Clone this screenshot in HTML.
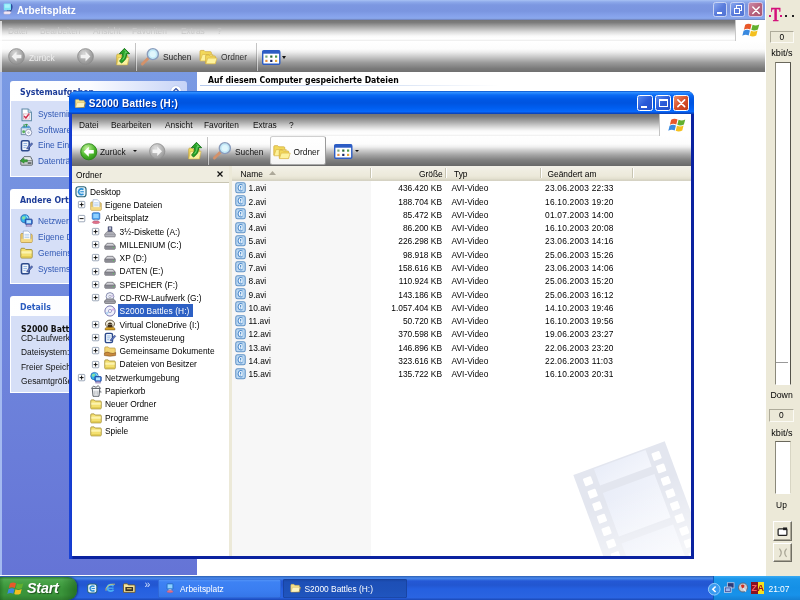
<!DOCTYPE html>
<html><head><meta charset="utf-8"><title>S2000 Battles (H:)</title>
<style>
*{box-sizing:border-box;margin:0;padding:0}
html,body{width:800px;height:600px;overflow:hidden;background:#fff}
body{position:relative;font:8.400px "Liberation Sans",sans-serif;color:#000}
.a{position:absolute;white-space:nowrap}
.b{font-weight:bold}
svg{position:absolute;overflow:visible}
/* background window */
#bt{left:0;top:0;width:765px;height:20.300px;background:linear-gradient(#a8c2f4 0,#8ca8ea 2px,#7c97e1 5px,#7a95e0 11px,#84a0ea 15px,#8aa8ee 18.300px,#7488c0 19.600px,#6a7488 20.300px)}
#bt .t{left:17px;top:5px;font:bold 10.1px "Liberation Sans",sans-serif;color:#fff;letter-spacing:.1px}
#bm{left:0;top:20.300px;width:765px;height:21.200px;background:linear-gradient(#747474 0,#7c7c7c 2.500px,#aaa 7px,#dcdcdc 12px,#fafafa 16px,#fff 19px,#f0f0f0 20.500px)}
#bm .m{top:5.800px;color:#c8c8c8;filter:blur(.6px)}
#bb{left:0;top:41.500px;width:765px;height:30.500px;background:linear-gradient(#fff 0,#fcfcfc 7px,#eee 10px,#ccc 14.500px,#9c9c9c 20.500px,#7a7a7a 26.500px,#6e6e6e 30.500px)}
#bside{left:0;top:72px;width:197px;height:503px;background:linear-gradient(#7a9ae3,#6574d6);border-left:2px solid #a4baf0}
.ph{left:10px;width:177px;height:20px;border-radius:3px 3px 0 0;background:linear-gradient(90deg,#fff 0,#fbfcff 45%,#c6d3f7 100%);color:#1d3c98;font:bold 8.700px "DejaVu Sans Condensed","Liberation Sans",sans-serif;padding:6.200px 0 0 10px}
.pb{left:10px;width:177px;background:#d6dff7;border:1px solid #fff;border-top:0}
.pl{left:38px;color:#3058b4}
.pd{left:21px;color:#111}
/* right panel */
#dsl{left:765px;top:0;width:35px;height:576px;background:#ece9d8;border-left:1.500px solid #fff}
.sunk{border:1px solid;border-color:#aeab9a #fbfaf4 #fbfaf4 #aeab9a}
.btn{background:#ece9d8;border:1px solid;border-color:#fff #716f64 #716f64 #fff;box-shadow:inset -1px -1px 0 #aca899}
/* taskbar */
#tb{left:0;top:576.400px;width:800px;height:23.600px;background:linear-gradient(#3a6cbc 0,#2f66c0 .8px,#4a8aec 2px,#3c78e2 3.200px,#2458d6 5px,#2256d0 9px,#2560e0 13px,#2862e0 18px,#2a64e2 21.500px,#1c4cbc 23.600px)}
#start{left:0;top:.3px;width:77px;height:23.300px;border-radius:0 9px 9px 0;background:linear-gradient(90deg,rgba(0,50,0,.25) 0,rgba(0,50,0,0) 4px,rgba(0,50,0,0) 80%,rgba(0,50,0,.35) 100%),linear-gradient(#2f7a36 0,#4fa84f 2.500px,#44a044 6px,#3a943a 12px,#3a943a 18px,#2f7c2f 23.300px);box-shadow:1px 0 2px rgba(0,0,40,.5)}
#start span{left:27px;top:3.300px;font:italic bold 14.300px "Liberation Sans",sans-serif;color:#fff;text-shadow:1px 1px 1px rgba(0,0,0,.45);letter-spacing:-.2px}
.tk{top:2.500px;height:19.500px;border-radius:2px;color:#fff}
.tk span{top:5px}
#tray{left:713px;top:0;width:87px;height:24px;background:linear-gradient(#3aaaf2 0,#1a96ea 3px,#1590e6 12px,#1892ea 19px,#1480d4 24px);border-left:1px solid #0e5cb8}
/* main window */
#w{left:69px;top:91px;width:625px;height:468px;background:linear-gradient(90deg,#1a44d8 0,#1238cc 3px,#0a22a0 4px);border-radius:7px 7px 0 0}
#wt{left:0;top:0;width:625px;height:23px;border-radius:7px 7px 0 0;background:linear-gradient(#0a50c8 0,#2e8eff 1.500px,#0a6af4 4px,#0058e6 8px,#0054e0 12px,#005ef0 17px,#0668fc 20.500px,#0a48c4 22.300px,#0a3cb0 23px)}
#wt .t{left:19.800px;top:7px;font:bold 10px "Liberation Sans",sans-serif;color:#fff;text-shadow:.8px .8px 0 #0a2a8a;letter-spacing:.24px}
.cb{top:4px;width:16px;height:16px;border:1px solid #fff;border-radius:2.500px}
#wc{left:3px;top:23px;width:619px;height:442px;background:#fff;overflow:hidden}
#wm{left:0;top:0;width:619px;height:22px;background:linear-gradient(#747474 0,#7c7c7c 2.500px,#aaa 8px,#e2e2e2 14px,#fafafa 17px,#fff 20px,#f2f2f2 21.500px,#fff 22px)}
#wm .m{top:6px;color:#111}
#wb{left:0;top:22px;width:619px;height:29.500px;background:linear-gradient(#fff 0,#fcfcfc 8px,#eee 11px,#d0d0d0 14px,#a4a4a4 19px,#808080 24px,#6a6a6a 29.500px)}
#tree{left:0;top:51.500px;width:157px;height:391px;background:#fff}
#treeh{left:0;top:0;width:157px;height:17px;background:#efede0;border-bottom:1px solid #c8c5b2}
#split{left:157px;top:51.500px;width:3px;height:391px;background:#ece9d8}
#list{left:160px;top:51.500px;width:459px;height:391px;background:#fff;overflow:hidden}
#lh{left:0;top:0;width:459px;height:15px;background:linear-gradient(#f3f1e8,#ece9da 10px,#e2dfce 13px,#d0ccbc 14.300px,#e4e2d6 15px)}
#lh span{top:3px}
.sep{top:2px;width:1px;height:10px;background:#c8c5b2;border-right:1px solid #fff;width:2px}
#sorted{left:0;top:15px;width:139px;height:377px;background:#f7f7f7}
.tr{left:0;height:13.280px;width:100%}
.tr span{top:1.800px}
.pm{width:7px;height:7px;border:.8px solid #8a96a8;background:#fff;border-radius:1px}
.pm:before{content:"";position:absolute;left:1px;top:2.300px;width:3.400px;height:.9px;background:#000}
.pm.p:after{content:"";position:absolute;left:2.250px;top:1.050px;width:.9px;height:3.400px;background:#000}
.r{left:0;height:13.280px;width:459px}
.r span{top:1.600px}
.dt{letter-spacing:.22px}
</style></head><body><div id="root" style="position:absolute;left:0;top:0;width:800px;height:600px;will-change:transform">
<div class="a" id="bt">
<svg style="left:3px;top:3px" width="10" height="12" viewBox="0 0 10 12" ><path d="M7.500 .8Q9.600 1 9.600 4Q9.600 7.500 6 8.500L7.500 7Z" fill="#2c4c9c"/><rect x=".8" y=".4" width="7.200" height="6.800" rx=".8" fill="#7ee4f6"/><rect x="1.800" y="1.300" width="5" height="3.500" fill="#a8f2fc"/><path d="M4 7.200Q7 7.800 8.800 6.500L8 8.800H3.500Z" fill="#3a4a8a"/><path d="M.3 10L1.800 8.300H7L8.300 9.800L6.500 11.300H1.500Z" fill="#f4e6f4" stroke="#9aa0c8" stroke-width=".5"/></svg>
<span class="a t">Arbeitsplatz</span>
<div class="a cb" style="left:713px;top:1.500px;width:14px;height:15.500px;border-color:#c8d4f4;background:linear-gradient(135deg,#8aa8ee,#5a7cdc 50%,#5274d4)"><div class="a" style="left:2.500px;top:9px;width:5.500px;height:2.300px;background:#fff"></div></div>
<div class="a cb" style="left:730px;top:1.500px;width:14.500px;height:15.500px;border-color:#c8d4f4;background:linear-gradient(135deg,#8aa8ee,#5a7cdc 50%,#5274d4)"><div class="a" style="left:5px;top:2.500px;width:6px;height:5.500px;border:1px solid #fff;border-top-width:1.800px"></div><div class="a" style="left:2.500px;top:5.500px;width:6px;height:5.500px;border:1px solid #fff;border-top-width:1.800px;background:#5a7cdc"></div></div>
<div class="a cb" style="left:748px;top:1.500px;width:15px;height:15.500px;border-color:#d8c8e4;background:linear-gradient(135deg,#cc8aa8,#b8627e 50%,#a85672)"><svg style="left:3px;top:3px" width="8" height="8.5" viewBox="0 0 8 8" ><path d="M.8 .8L7.200 7.200M7.200 .8L.8 7.200" stroke="#fff" stroke-width="1.500" stroke-linecap="round"/></svg></div>
</div>
<div class="a" id="bm">
<span class="a m" style="left:8px">Datei</span>
<span class="a m" style="left:40px">Bearbeiten</span>
<span class="a m" style="left:93px">Ansicht</span>
<span class="a m" style="left:132px">Favoriten</span>
<span class="a m" style="left:181px">Extras</span>
<span class="a m" style="left:217px">?</span>
<div class="a" style="left:734.500px;top:0;width:30.500px;height:21px;background:#fff;border-left:1px solid #c8c8c8"><svg style="left:6.5px;top:2px" width="18" height="16" viewBox="-1.5 0 17 15" ><g opacity="1"><path d="M1.500 2.500Q4.500 .8 7.500 2.300L6.300 7Q3.300 5.600 .3 7.200Z" fill="#e8582a"/><path d="M8.500 2.600Q11.500 4 14.800 2.300L13.500 7Q10.300 8.600 7.300 7.300Z" fill="#62b030"/><path d="M0 8.300Q3 6.600 6 8L4.800 12.700Q1.800 11.300 -1.200 12.900Z" fill="#3a8ae0"/><path d="M7 8.300Q10 9.700 13.200 8L12 12.700Q8.800 14.300 5.800 13Z" fill="#f4c020"/></g></svg></div>
</div>
<div class="a" id="bb">
<svg style="left:7.5px;top:6.5px" width="17" height="17" viewBox="0 0 16 16" ><defs><radialGradient id="g1" cx=".4" cy=".3" r=".8"><stop offset="0" stop-color="#d8d8d8"/><stop offset=".6" stop-color="#a4a4a4"/><stop offset="1" stop-color="#8a8a8a"/></radialGradient></defs><circle cx="8" cy="8" r="7.4" fill="url(#g1)" stroke="#8a8a8a" stroke-width=".8"/><polygon points="3.4,8 8,3.4 8,6.3 12.6,6.3 12.6,9.7 8,9.7 8,12.6" fill="#f2f2f2"/></svg>
<span class="a" style="left:29px;top:11px;color:#eee;filter:blur(.4px)">Zurück</span>
<svg style="left:77px;top:6.5px" width="17" height="17" viewBox="0 0 16 16" ><defs><radialGradient id="g2" cx=".4" cy=".3" r=".8"><stop offset="0" stop-color="#d8d8d8"/><stop offset=".6" stop-color="#a4a4a4"/><stop offset="1" stop-color="#8a8a8a"/></radialGradient></defs><circle cx="8" cy="8" r="7.4" fill="url(#g2)" stroke="#8a8a8a" stroke-width=".8"/><polygon points="12.6,8 8,3.4 8,6.3 3.4,6.3 3.4,9.7 8,9.7 8,12.6" fill="#f2f2f2"/></svg>
<svg style="left:115.5px;top:5.5px" width="15" height="19" viewBox="0 0 16 19" ><path d="M.8 8Q.8 7 1.800 7H4.500L5.500 8H11.500Q12.500 8 12.500 9V18H.8Z" fill="#f2dc5e" stroke="#c8a838" stroke-width=".8"/><path d="M2.500 10.500H14L12 18.500H.8Z" fill="#faf0a0" stroke="#d0b040" stroke-width=".6"/><path d="M9 .8L14.600 6.500H11.500Q11.800 12.500 6 16.500L3.800 14.500Q7.500 11 7 6.500H3.600Z" fill="#28a428" stroke="#147014" stroke-width=".9" stroke-linejoin="round"/><path d="M9 2.500L11.500 5.200H9.800Q10 10 7 13" fill="none" stroke="#7ad87a" stroke-width=".9"/></svg>
<div class="a" style="left:136px;top:1px;width:1px;height:28px;background:rgba(255,255,255,.55);box-shadow:-1px 0 0 rgba(90,90,90,.35)"></div>
<svg style="left:140px;top:5px" width="20" height="19" viewBox="0 0 20 20" ><path d="M2 18L8.500 11.500" stroke="#d4926a" stroke-width="3" stroke-linecap="round"/><circle cx="13" cy="7.500" r="5.800" fill="#c4eaf8" stroke="#8a9cbc" stroke-width="1.500"/><circle cx="13" cy="7.500" r="3.200" fill="#e0f6fc"/></svg>
<span class="a" style="left:163px;top:10.500px;color:#222">Suchen</span>
<svg style="left:199px;top:6px" width="19" height="17" viewBox="0 0 23 21" ><path d="M1 4.200Q1 3 2.200 3H6L7.500 4.500H13.800Q15 4.500 15 5.700V15H1Z" fill="#f2d85a" stroke="#cfa83a" stroke-width=".9"/><path d="M4 8H17L14.600 16H1.200Z" fill="#fdf29c" stroke="#d8b444" stroke-width=".8"/><path d="M8 9.500Q8 8.500 9 8.500H12L13.200 9.800H19Q20 9.800 20 10.800V19H8Z" fill="#f2d85a" stroke="#cfa83a" stroke-width=".9"/><path d="M10.500 12.500H22L19.800 19.600H8.200Z" fill="#fdf29c" stroke="#d8b444" stroke-width=".8"/></svg>
<span class="a" style="left:221px;top:10.500px;color:#333">Ordner</span>
<div class="a" style="left:256.500px;top:1px;width:1px;height:28px;background:rgba(255,255,255,.55);box-shadow:-1px 0 0 rgba(90,90,90,.35)"></div>
<svg style="left:262px;top:8px" width="18.5" height="15" viewBox="0 0 18.5 15" ><rect x=".7" y=".7" width="17.100" height="13.600" rx="1.200" fill="#fff" stroke="#2c5cc4" stroke-width="1.400"/><rect x=".7" y=".7" width="17.100" height="3" fill="#2c5cc4"/><g><rect x="3.300" y="5.500" width="2.200" height="2.200" fill="#7aa878"/><rect x="8.200" y="5.500" width="2.200" height="2.200" fill="#2a6a3a"/><rect x="13" y="5.500" width="2.200" height="2.200" fill="#4a9a4a"/><rect x="3.300" y="9.800" width="2.200" height="2.200" fill="#e89040"/><rect x="8.200" y="9.800" width="2.200" height="2.200" fill="#1a2a6a"/><rect x="13" y="9.800" width="2.200" height="2.200" fill="#e8a838"/></g></svg>
<div class="a" style="left:282px;top:14px;border:2.500px solid transparent;border-top:3px solid #111"></div>
</div>
<div class="a" id="bside"></div>
<div class="a" style="left:0;top:21px;width:1.500px;height:51px;background:rgba(255,255,255,.7)"></div>
<div class="a ph" style="top:81px">Systemaufgaben</div><svg style="left:170px;top:84.5px" width="12" height="12" viewBox="0 0 12 12" ><circle cx="6" cy="6" r="5.300" fill="#fff" stroke="#b8c8ee" stroke-width=".8"/><path d="M3.500 6L6 3.500L8.500 6M3.500 8.800L6 6.300L8.500 8.800" fill="none" stroke="#2a4aa0" stroke-width="1.100"/></svg>
<div class="a pb" style="top:101px;height:75.500px"></div>
<svg style="left:20px;top:107.60000000000001px" width="13" height="13.5" viewBox="0 0 16 16" ><path d="M2.500 1H10L14 5V15.300H2.500Z" fill="#fff" stroke="#5a86a4" stroke-width="1.300"/><path d="M10 1V5H14" fill="#d4e4f0" stroke="#5a86a4" stroke-width="1"/><path d="M5 9.500L7.200 12L11.500 6.500" fill="none" stroke="#d03050" stroke-width="1.800"/><rect x="4.300" y="7" width="7" height="6.300" fill="none" stroke="#c890a0" stroke-width=".7"/></svg>
<span class="a pl" style="top:109.4px">Systeminformationen anzeigen</span>
<svg style="left:20px;top:123.10000000000001px" width="13" height="13.5" viewBox="0 0 16 16" ><path d="M1.500 6L4 3.500H11L13 6V14H1.500Z" fill="#d8e6f0" stroke="#5a7a98" stroke-width="1"/><path d="M4 3.500H11L13 6H1.500Z" fill="#58a0d8"/><path d="M5 1V5M8 .8V4.500M6.300 1.500H9.500" stroke="#3a9a4a" stroke-width="1.200"/><circle cx="10.500" cy="11.500" r="4" fill="#fafbff" stroke="#7a86a8" stroke-width="1"/><circle cx="10.500" cy="11.500" r="1.100" fill="#cfd6e8" stroke="#8a94b0" stroke-width=".5"/><circle cx="4.500" cy="10.500" r="1.800" fill="#58b058"/></svg>
<span class="a pl" style="top:124.9px">Software</span>
<svg style="left:20px;top:138.6px" width="13" height="13.5" viewBox="0 0 16 16" ><rect x="1.800" y="1.800" width="9.500" height="12.400" rx="1.800" fill="#f0f6fc" stroke="#2c4a8c" stroke-width="1.900"/><path d="M4.200 5.300H8.800M4.200 7.800H8.800M4.200 10.300H7" stroke="#7aa4dc" stroke-width="1"/><path d="M8.800 10L14.300 4.300L15.600 5.800L10.500 11.500L8.300 12Z" fill="#5a76c0" stroke="#2a3a78" stroke-width=".7"/></svg>
<span class="a pl" style="top:140.4px">Eine Einstellung ändern</span>
<svg style="left:20px;top:154.1px" width="13" height="13.5" viewBox="0 0 16 15" ><path d="M1 7L5 2.500H13L15.300 7V12Q15.300 13 14.300 13H2Q1 13 1 12Z" fill="#c8ccd0" stroke="#4a5458" stroke-width="1"/><path d="M5.300 3.300H12.600L14.300 6.800H2.200Z" fill="#e4e8ea"/><path d="M1.300 7.300H15" stroke="#606868" stroke-width=".8"/><path d="M.3 7.500L5 4.500V6.300H9V8.800H5V10.500Z" fill="#3aa43a" stroke="#1a701a" stroke-width=".6"/><rect x="9.500" y="9.500" width="4.500" height="1.600" fill="#404848"/></svg>
<span class="a pl" style="top:155.9px">Datenträger auswerfen</span>
<div class="a ph" style="top:188.500px">Andere Orte</div><svg style="left:170px;top:192px" width="12" height="12" viewBox="0 0 12 12" ><circle cx="6" cy="6" r="5.300" fill="#fff" stroke="#b8c8ee" stroke-width=".8"/><path d="M3.500 6L6 3.500L8.500 6M3.500 8.800L6 6.300L8.500 8.800" fill="none" stroke="#2a4aa0" stroke-width="1.100"/></svg>
<div class="a pb" style="top:208.500px;height:75.500px"></div>
<svg style="left:20px;top:214.0px" width="13" height="13.5" viewBox="0 0 16 16" ><circle cx="6" cy="5.500" r="5" fill="#36b4ec" stroke="#1a5aa8" stroke-width=".9"/><path d="M2.500 3.500Q4.500 1.500 7 3Q6.500 6 4 6.800Q2 5.500 2.500 3.500Z" fill="#8ae0a0"/><path d="M7.500 2Q10 3 10 6" fill="none" stroke="#c8f0ff" stroke-width="1"/><rect x="6.500" y="6" width="8.500" height="6.500" rx="1" fill="#3a7ad8" stroke="#1c3c8c" stroke-width="1"/><rect x="8" y="7.300" width="5.500" height="3.800" fill="#b4e4ff"/><path d="M8.500 12.500H13L14.200 14.800H7.300Z" fill="#c4b4dc" stroke="#6a5a98" stroke-width=".6"/></svg>
<span class="a pl" style="top:215.8px">Netzwerkumgebung</span>
<svg style="left:20px;top:230.0px" width="13" height="13.5" viewBox="0 0 16 16" ><path d="M1 5Q1 4 2 4H6L7 5H14Q15 5 15 6V14Q15 15 14 15H2Q1 15 1 14Z" fill="#f0cf6c" stroke="#b8923a" stroke-width=".9"/><path d="M4 1H10L13 4V12H4Z" fill="#fff" stroke="#8aa0c8" stroke-width=".8"/><path d="M5.500 5H11.500M5.500 7H11.500M5.500 9H11.500" stroke="#9cc0ea" stroke-width=".9"/><path d="M1.500 10.500H14.500V14.500H1.500Z" fill="#f6dc86" opacity=".9"/></svg>
<span class="a pl" style="top:231.8px">Eigene Dateien</span>
<svg style="left:20px;top:246.0px" width="13" height="13.5" viewBox="0 0 16 15" ><path d="M1 3.200Q1 2 2.200 2H5.500L7 3.500H13.800Q15 3.500 15 4.700V12.800Q15 14 13.800 14H2.200Q1 14 1 12.800Z" fill="#f4e070" stroke="#a08c34" stroke-width="1.100"/><path d="M1.700 5.600H14.300V8.500H1.700Z" fill="#fdf6b8" opacity=".85"/><path d="M1.700 11.500H14.300V13.300H1.700Z" fill="#e0c850" opacity=".8"/></svg>
<span class="a pl" style="top:247.8px">Gemeinsame Dokumente</span>
<svg style="left:20px;top:262.0px" width="13" height="13.5" viewBox="0 0 16 16" ><rect x="1.800" y="1.800" width="9.500" height="12.400" rx="1.800" fill="#f0f6fc" stroke="#2c4a8c" stroke-width="1.900"/><path d="M4.200 5.300H8.800M4.200 7.800H8.800M4.200 10.300H7" stroke="#7aa4dc" stroke-width="1"/><path d="M8.800 10L14.300 4.300L15.600 5.800L10.500 11.500L8.300 12Z" fill="#5a76c0" stroke="#2a3a78" stroke-width=".7"/></svg>
<span class="a pl" style="top:263.8px">Systemsteuerung</span>
<div class="a ph" style="top:296px;color:#2a5cc0">Details</div><svg style="left:170px;top:299.5px" width="12" height="12" viewBox="0 0 12 12" ><circle cx="6" cy="6" r="5.300" fill="#fff" stroke="#b8c8ee" stroke-width=".8"/><path d="M3.500 6L6 3.500L8.500 6M3.500 8.800L6 6.300L8.500 8.800" fill="none" stroke="#2a4aa0" stroke-width="1.100"/></svg>
<div class="a pb" style="top:316px;height:77px"></div>
<span class="a pd" style="top:323.500px;font:bold 8.600px 'DejaVu Sans Condensed','Liberation Sans',sans-serif">S2000 Battles (H:)</span>
<span class="a pd" style="top:333px">CD-Laufwerk</span>
<span class="a pd" style="top:347px">Dateisystem: CDFS</span>
<span class="a pd" style="top:361.500px">Freier Speicher: 0 Byte</span>
<span class="a pd" style="top:375.500px">Gesamtgröße: 2,79 GB</span>
<div class="a" style="left:197px;top:72px;width:568px;height:504px;background:#fff"></div>
<div class="a" style="left:208px;top:75px;font:bold 8.600px 'DejaVu Sans Condensed','Liberation Sans',sans-serif">Auf diesem Computer gespeicherte Dateien</div>
<div class="a" style="left:200px;top:85.300px;width:300px;height:1px;background:linear-gradient(90deg,#b4c8ec,#d4e0f4 60%,#fff)"></div>
<div class="a" id="dsl">
<span class="a" style="left:5.0px;top:4.500px;font:bold 19px 'Liberation Serif',serif;color:#d4107a;line-height:19px;-webkit-text-stroke:.5px #d4107a;transform:scaleX(.74);transform-origin:0 0">T</span>
<div class="a" style="left:2.7000000000000455px;top:15px;width:2px;height:2px;background:#d4107a"></div>
<div class="a" style="left:14.100000000000023px;top:15px;width:2px;height:2px;background:#d4107a"></div>
<div class="a" style="left:19.299999999999955px;top:14.800px;width:2.200px;height:2.200px;background:#222"></div>
<div class="a" style="left:26.299999999999955px;top:14.800px;width:2.200px;height:2.200px;background:#222"></div>
<div class="a sunk" style="left:3.5px;top:30.500px;width:24.500px;height:12.500px;text-align:center;line-height:11px">0</div>
<span class="a" style="left:5.2999999999999545px;top:48px;font-size:9.100px">kbit/s</span>
<div class="a" style="left:8.5px;top:61.500px;width:16.200px;height:323px;background:#fff;border:1px solid;border-color:#6a685c #55534a #fff #8a887a"><div class="a" style="left:0;top:299px;width:12px;height:1px;background:#999"></div></div>
<span class="a" style="left:4.5px;top:389.500px;font-size:8.700px">Down</span>
<div class="a sunk" style="left:3.1000000000000227px;top:409px;width:24.500px;height:13px;text-align:center;line-height:11.500px">0</div>
<span class="a" style="left:5.2999999999999545px;top:427.500px;font-size:9.100px">kbit/s</span>
<div class="a" style="left:8.5px;top:441px;width:16.200px;height:53px;background:#fff;border:1px solid;border-color:#6a685c #d8d5c4 #fff #8a887a"></div>
<span class="a" style="left:10.100000000000023px;top:500px">Up</span>
<div class="a btn" style="left:6.5px;top:521px;width:19.500px;height:19.500px"><svg style="left:3.8px;top:4.5px" width="11" height="9" viewBox="0 0 9 8" ><rect x=".6" y="1.600" width="7.800" height="5.800" rx=".8" fill="#fff" stroke="#222" stroke-width="1.100"/><rect x="5" y=".4" width="3.600" height="2.400" fill="#222"/></svg></div>
<div class="a btn" style="left:6.5px;top:542.500px;width:19.500px;height:19.500px"><svg style="left:4.3px;top:4.5px" width="10" height="9.5" viewBox="0 0 8 8" ><path d="M1 .5Q4 4 1 7.500M7 .5Q4 4 7 7.500" fill="none" stroke="#a8a595" stroke-width="1"/></svg></div>
</div>
<div class="a" id="tb"><div class="a" id="start"><svg style="left:7px;top:4.5px" width="17" height="15" viewBox="-1.5 0 17 15" ><g opacity="1"><path d="M1.500 2.500Q4.500 .8 7.500 2.300L6.300 7Q3.300 5.600 .3 7.200Z" fill="#e8582a"/><path d="M8.500 2.600Q11.500 4 14.800 2.300L13.500 7Q10.300 8.600 7.300 7.300Z" fill="#62b030"/><path d="M0 8.300Q3 6.600 6 8L4.800 12.700Q1.800 11.300 -1.200 12.900Z" fill="#3a8ae0"/><path d="M7 8.300Q10 9.700 13.200 8L12 12.700Q8.800 14.300 5.800 13Z" fill="#f4c020"/></g></svg><span class="a">Start</span></div>
<svg style="left:87px;top:6.5px" width="10.5" height="11" viewBox="0 0 16 16" ><rect x="1" y="1" width="14" height="14" rx="3.5" fill="#e8f4fb" stroke="#2a6478" stroke-width="1.6"/><path d="M11.500 5Q8 3 5.500 5.500Q3.500 8 5.500 10.500Q8 13 11.500 11" fill="none" stroke="#2a8fd6" stroke-width="2.400"/><path d="M7 8H12" stroke="#2a8fd6" stroke-width="1.600"/></svg>
<svg style="left:105px;top:6px" width="11" height="12" viewBox="0 0 16 16" ><path d="M12.500 5.500Q10 2.500 6.500 3.500Q3 5 3.500 9Q4.500 12.500 8.500 12.500Q11 12.300 12.500 10.500" fill="none" stroke="#4ab0f4" stroke-width="2.600"/><path d="M4 8.300H12.500" stroke="#4ab0f4" stroke-width="1.800"/><path d="M1.500 12Q0 8 5 4.500Q10 1.500 14.500 2.500" fill="none" stroke="#f0d050" stroke-width="1.100"/></svg>
<svg style="left:122.5px;top:7px" width="12.5" height="10" viewBox="0 0 13 10" ><path d="M.5 1.500Q.5 .6 1.400 .6H4.500L5.500 1.800H11.600Q12.500 1.800 12.500 2.700V9.500H.5Z" fill="#f4e4a0" stroke="#705820" stroke-width=".9"/><rect x="2.500" y="4" width="8" height="4.200" fill="#3a3020"/><rect x="4" y="5" width="5" height="1.400" fill="#c8b060"/></svg>
<span class="a" style="left:144.500px;top:2px;color:#cfe0ff;font-size:10.500px">»</span>
<div class="a tk" style="left:157.500px;width:123.500px;background:linear-gradient(#5a9af8 0,#3e82f4 3px,#3a7df0 12px,#3474e6 19.500px);box-shadow:inset 0 0 0 .6px #2a5cc8"><svg style="left:7px;top:3.5px" width="10" height="12" viewBox="0 0 16 16" ><rect x="3" y="1" width="10" height="9" rx="1.500" fill="#4aa3ee" stroke="#2a62b8" stroke-width="1"/><rect x="4.500" y="2.500" width="7" height="5.500" fill="#8fd0ff"/><path d="M6 10H10L11 12.500H5Z" fill="#c8d4e8" stroke="#8090b0" stroke-width=".5"/><ellipse cx="8" cy="13.800" rx="5" ry="1.700" fill="#e2728a" stroke="#b04060" stroke-width=".5"/></svg><span class="a" style="left:22.500px">Arbeitsplatz</span></div>
<div class="a tk" style="left:282.500px;width:124.500px;background:linear-gradient(#1844a0 0,#1d4fb6 3px,#1e52ba 12px,#2056c0 19.500px);box-shadow:inset 0 0 0 .6px #163c94"><svg style="left:7px;top:4.5px" width="11" height="10" viewBox="0 0 16 15" ><path d="M1 3.200Q1 2 2.200 2H5.500L7 3.500H12.800Q14 3.500 14 4.700V13H1Z" fill="#f4e08a" stroke="#c8a850" stroke-width=".8"/><path d="M3.500 6.500H15.600L13.600 13.600H1.200Z" fill="#fdf4c0" stroke="#cfb058" stroke-width=".7"/><path d="M14.200 7L15.800 6.800L13.800 13.800H2L13 13Z" fill="#4a4020" opacity=".55"/></svg><span class="a" style="left:22px">S2000 Battles (H:)</span></div>
<div class="a" id="tray">
<svg style="left:-6.5px;top:6.5px" width="12.5" height="12.5" viewBox="0 0 12 12" ><circle cx="6" cy="6" r="5.600" fill="#3a9af0" stroke="#a8d8ff" stroke-width=".8"/><path d="M7.300 3.300L4.600 6L7.300 8.700" fill="none" stroke="#fff" stroke-width="1.500"/></svg>
<svg style="left:9.5px;top:6px" width="10.5" height="12" viewBox="0 0 11 12" ><rect x="3.500" y=".5" width="7" height="5.500" fill="#2a3a78" stroke="#c8d0e8" stroke-width=".8"/><rect x=".5" y="5" width="7" height="5.500" fill="#3a4a98" stroke="#d8e0f0" stroke-width=".8"/><rect x="1.800" y="6.300" width="4.400" height="3" fill="#9ab8f0"/></svg>
<svg style="left:24px;top:6px" width="10" height="11" viewBox="0 0 10 11" ><circle cx="5" cy="5.500" r="4.500" fill="#c8ccd4" stroke="#5a6070" stroke-width=".9"/><path d="M3 3Q5 1.800 6.500 3.500Q6.500 6 4.500 6.500Q3 5 3 3Z" fill="#d03020"/><path d="M5 6L8 9.500" stroke="#e8e8f0" stroke-width="1.200"/></svg>
<div class="a" style="left:37px;top:6px;width:6.500px;height:12px;background:#8a1020;color:#ff5a5a;font:bold 9px 'Liberation Sans',sans-serif;line-height:12px;text-align:center">Z</div>
<div class="a" style="left:43.500px;top:6px;width:6.500px;height:12px;background:#f4e020;color:#a01020;font:bold 9px 'Liberation Sans',sans-serif;line-height:12px;text-align:center">A</div>
<span class="a" style="left:54.500px;top:7.500px;color:#fff;font-size:8.500px;letter-spacing:-.1px">21:07</span>
</div></div>
<div class="a" id="w">
<div class="a" id="wt"><svg style="left:4.5px;top:6.5px" width="12.5" height="10.5" viewBox="0 0 16 15" ><path d="M1 3.200Q1 2 2.200 2H5.500L7 3.500H12.800Q14 3.500 14 4.700V13H1Z" fill="#f4e08a" stroke="#c8a850" stroke-width=".8"/><path d="M3.500 6.500H15.600L13.600 13.600H1.200Z" fill="#fdf4c0" stroke="#cfb058" stroke-width=".7"/><path d="M14.200 7L15.800 6.800L13.800 13.800H2L13 13Z" fill="#4a4020" opacity=".55"/></svg><span class="a t">S2000 Battles (H:)</span>
<div class="a cb" style="left:568px;background:linear-gradient(135deg,#5a8cf0,#2a5ad8 50%,#2450c8)"><div class="a" style="left:3px;top:9.500px;width:6px;height:2.500px;background:#fff"></div></div>
<div class="a cb" style="left:586px;background:linear-gradient(135deg,#5a8cf0,#2a5ad8 50%,#2450c8)"><div class="a" style="left:3px;top:3px;width:8.500px;height:8px;border:1px solid #fff;border-top-width:2.200px"></div></div>
<div class="a cb" style="left:604px;background:linear-gradient(135deg,#f0906a,#d8502a 50%,#c03c18)"><svg style="left:3px;top:3px" width="8.5" height="8.5" viewBox="0 0 8 8" ><path d="M.8 .8L7.200 7.200M7.200 .8L.8 7.200" stroke="#fff" stroke-width="1.500" stroke-linecap="round"/></svg></div>
</div>
<div class="a" id="wc">
<div class="a" id="wm">
<span class="a m" style="left:7px">Datei</span>
<span class="a m" style="left:39px">Bearbeiten</span>
<span class="a m" style="left:93px">Ansicht</span>
<span class="a m" style="left:132px">Favoriten</span>
<span class="a m" style="left:181px">Extras</span>
<span class="a m" style="left:217px">?</span>
<div class="a" style="left:587px;top:0;width:32px;height:22px;background:#fff;border-left:1px solid #c4c4c4"><svg style="left:8px;top:2.5px" width="18" height="16" viewBox="-1.5 0 17 15" ><g opacity="1"><path d="M1.500 2.500Q4.500 .8 7.500 2.300L6.300 7Q3.300 5.600 .3 7.200Z" fill="#e8582a"/><path d="M8.500 2.600Q11.500 4 14.800 2.300L13.500 7Q10.300 8.600 7.300 7.300Z" fill="#62b030"/><path d="M0 8.300Q3 6.600 6 8L4.800 12.700Q1.800 11.300 -1.200 12.900Z" fill="#3a8ae0"/><path d="M7 8.300Q10 9.700 13.200 8L12 12.700Q8.800 14.300 5.800 13Z" fill="#f4c020"/></g></svg></div>
</div>
<div class="a" id="wb">
<svg style="left:7.5px;top:6.5px" width="17.5" height="17.5" viewBox="0 0 16 16" ><defs><radialGradient id="g3" cx=".4" cy=".3" r=".8"><stop offset="0" stop-color="#c8f4a0"/><stop offset=".6" stop-color="#48b428"/><stop offset="1" stop-color="#2a8418"/></radialGradient></defs><circle cx="8" cy="8" r="7.4" fill="url(#g3)" stroke="#2a8418" stroke-width=".8"/><polygon points="3.4,8 8,3.4 8,6.3 12.6,6.3 12.6,9.7 8,9.7 8,12.6" fill="#fff"/></svg>
<span class="a" style="left:28px;top:10.500px;color:#111">Zurück</span>
<div class="a" style="left:61px;top:14px;border:2.200px solid transparent;border-top:2.800px solid #111"></div>
<svg style="left:77px;top:7px" width="16.5" height="16.5" viewBox="0 0 16 16" ><defs><radialGradient id="g4" cx=".4" cy=".3" r=".8"><stop offset="0" stop-color="#e0e0e0"/><stop offset=".6" stop-color="#b0b0b0"/><stop offset="1" stop-color="#909090"/></radialGradient></defs><circle cx="8" cy="8" r="7.4" fill="url(#g4)" stroke="#909090" stroke-width=".8"/><polygon points="12.6,8 8,3.4 8,6.3 3.4,6.3 3.4,9.7 8,9.7 8,12.6" fill="#f4f4f4"/></svg>
<svg style="left:115.5px;top:5px" width="15" height="19" viewBox="0 0 16 19" ><path d="M.8 8Q.8 7 1.800 7H4.500L5.500 8H11.500Q12.500 8 12.500 9V18H.8Z" fill="#f2dc5e" stroke="#c8a838" stroke-width=".8"/><path d="M2.500 10.500H14L12 18.500H.8Z" fill="#faf0a0" stroke="#d0b040" stroke-width=".6"/><path d="M9 .8L14.600 6.500H11.500Q11.800 12.500 6 16.500L3.800 14.500Q7.500 11 7 6.500H3.600Z" fill="#28a428" stroke="#147014" stroke-width=".9" stroke-linejoin="round"/><path d="M9 2.500L11.500 5.200H9.800Q10 10 7 13" fill="none" stroke="#7ad87a" stroke-width=".9"/></svg>
<div class="a" style="left:136px;top:1px;width:1px;height:28px;background:rgba(255,255,255,.55);box-shadow:-1px 0 0 rgba(90,90,90,.35)"></div>
<svg style="left:140px;top:5px" width="20" height="19" viewBox="0 0 20 20" ><path d="M2 18L8.500 11.500" stroke="#d4926a" stroke-width="3" stroke-linecap="round"/><circle cx="13" cy="7.500" r="5.800" fill="#c4eaf8" stroke="#8a9cbc" stroke-width="1.500"/><circle cx="13" cy="7.500" r="3.200" fill="#e0f6fc"/></svg>
<span class="a" style="left:163px;top:10.500px;color:#111">Suchen</span>
<div class="a" style="left:197.500px;top:.3px;width:56.500px;height:29px;background:linear-gradient(#fff,#fcfcfc 60%,#f4f4f4);border:1px solid #c4c4c4;border-color:#d0d0d0 #9a9a9a #a8a8a8 #c8c8c8;border-radius:2.500px"></div>
<svg style="left:200.5px;top:7px" width="18" height="17" viewBox="0 0 23 21" ><path d="M1 4.200Q1 3 2.200 3H6L7.500 4.500H13.800Q15 4.500 15 5.700V15H1Z" fill="#f2d85a" stroke="#cfa83a" stroke-width=".9"/><path d="M4 8H17L14.600 16H1.200Z" fill="#fdf29c" stroke="#d8b444" stroke-width=".8"/><path d="M8 9.500Q8 8.500 9 8.500H12L13.200 9.800H19Q20 9.800 20 10.800V19H8Z" fill="#f2d85a" stroke="#cfa83a" stroke-width=".9"/><path d="M10.500 12.500H22L19.800 19.600H8.200Z" fill="#fdf29c" stroke="#d8b444" stroke-width=".8"/></svg>
<span class="a" style="left:221.500px;top:10.500px;color:#111">Ordner</span>
<svg style="left:261.5px;top:7.8px" width="18.5" height="15" viewBox="0 0 18.5 15" ><rect x=".7" y=".7" width="17.100" height="13.600" rx="1.200" fill="#fff" stroke="#2c5cc4" stroke-width="1.400"/><rect x=".7" y=".7" width="17.100" height="3" fill="#2c5cc4"/><g><rect x="3.300" y="5.500" width="2.200" height="2.200" fill="#7aa878"/><rect x="8.200" y="5.500" width="2.200" height="2.200" fill="#2a6a3a"/><rect x="13" y="5.500" width="2.200" height="2.200" fill="#4a9a4a"/><rect x="3.300" y="9.800" width="2.200" height="2.200" fill="#e89040"/><rect x="8.200" y="9.800" width="2.200" height="2.200" fill="#1a2a6a"/><rect x="13" y="9.800" width="2.200" height="2.200" fill="#e8a838"/></g></svg>
<div class="a" style="left:282.500px;top:14px;border:2.200px solid transparent;border-top:2.800px solid #111"></div>
</div>
<div class="a" id="tree"><div class="a" id="treeh"><span class="a" style="left:4px;top:4.500px">Ordner</span><svg style="left:145px;top:5px" width="6" height="6" viewBox="0 0 6 6" ><path d="M.5 .5L5.500 5.500M5.500 .5L.5 5.500" stroke="#111" stroke-width="1.200"/></svg></div>
<div class="a tr" style="top:19.46px">
<svg style="left:2.5px;top:0.6px" width="12" height="11.5" viewBox="0 0 16 16" ><rect x="1" y="1" width="14" height="14" rx="3.5" fill="#e8f4fb" stroke="#2a6478" stroke-width="1.6"/><path d="M11.500 5Q8 3 5.500 5.500Q3.500 8 5.500 10.500Q8 13 11.500 11" fill="none" stroke="#2a8fd6" stroke-width="2.400"/><path d="M7 8H12" stroke="#2a8fd6" stroke-width="1.600"/></svg>
<span class="a" style="left:18px">Desktop</span>
</div>
<div class="a tr" style="top:32.74px">
<svg style="left:5.5px;top:3.1px" width="7.2" height="7.2" viewBox="0 0 7.2 7.2" ><rect x=".4" y=".4" width="6.400" height="6.400" rx=".8" fill="#fff" stroke="#8794a8" stroke-width=".8"/><path d="M1.600 3.600H5.600" stroke="#111" stroke-width="1"/><path d="M3.600 1.600V5.600" stroke="#111" stroke-width="1"/></svg>
<svg style="left:17.5px;top:0.8px" width="12" height="12" viewBox="0 0 16 16" ><path d="M1 5Q1 4 2 4H6L7 5H14Q15 5 15 6V14Q15 15 14 15H2Q1 15 1 14Z" fill="#f0cf6c" stroke="#b8923a" stroke-width=".9"/><path d="M4 1H10L13 4V12H4Z" fill="#fff" stroke="#8aa0c8" stroke-width=".8"/><path d="M5.500 5H11.500M5.500 7H11.500M5.500 9H11.500" stroke="#9cc0ea" stroke-width=".9"/><path d="M1.500 10.500H14.500V14.500H1.500Z" fill="#f6dc86" opacity=".9"/></svg>
<span class="a" style="left:33px">Eigene Dateien</span>
</div>
<div class="a tr" style="top:46.02px">
<svg style="left:5.5px;top:3.1px" width="7.2" height="7.2" viewBox="0 0 7.2 7.2" ><rect x=".4" y=".4" width="6.400" height="6.400" rx=".8" fill="#fff" stroke="#8794a8" stroke-width=".8"/><path d="M1.600 3.600H5.600" stroke="#111" stroke-width="1"/></svg>
<svg style="left:17.5px;top:0.8px" width="12" height="12" viewBox="0 0 16 16" ><rect x="3" y="1" width="10" height="9" rx="1.500" fill="#4aa3ee" stroke="#2a62b8" stroke-width="1"/><rect x="4.500" y="2.500" width="7" height="5.500" fill="#8fd0ff"/><path d="M6 10H10L11 12.500H5Z" fill="#c8d4e8" stroke="#8090b0" stroke-width=".5"/><ellipse cx="8" cy="13.800" rx="5" ry="1.700" fill="#e2728a" stroke="#b04060" stroke-width=".5"/></svg>
<span class="a" style="left:33px">Arbeitsplatz</span>
</div>
<div class="a tr" style="top:59.30px">
<svg style="left:20px;top:3.1px" width="7.2" height="7.2" viewBox="0 0 7.2 7.2" ><rect x=".4" y=".4" width="6.400" height="6.400" rx=".8" fill="#fff" stroke="#8794a8" stroke-width=".8"/><path d="M1.600 3.600H5.600" stroke="#111" stroke-width="1"/><path d="M3.600 1.600V5.600" stroke="#111" stroke-width="1"/></svg>
<svg style="left:32px;top:0.8px" width="12" height="12" viewBox="0 0 16 16" ><path d="M5.500 1H10.500V8H5.500Z" fill="#5a6088" stroke="#303658" stroke-width=".7"/><path d="M7 1.500H9V4.500H7Z" fill="#e8ecf8"/><path d="M1 11L4 7.500H12L15 11V13.500Q15 14.500 14 14.500H2Q1 14.500 1 13.500Z" fill="#b4b4bc" stroke="#686870" stroke-width=".8"/><path d="M1.500 11H14.500" stroke="#808088" stroke-width=".7"/></svg>
<span class="a" style="left:47.6px">3½-Diskette (A:)</span>
</div>
<div class="a tr" style="top:72.58px">
<svg style="left:20px;top:3.1px" width="7.2" height="7.2" viewBox="0 0 7.2 7.2" ><rect x=".4" y=".4" width="6.400" height="6.400" rx=".8" fill="#fff" stroke="#8794a8" stroke-width=".8"/><path d="M1.600 3.600H5.600" stroke="#111" stroke-width="1"/><path d="M3.600 1.600V5.600" stroke="#111" stroke-width="1"/></svg>
<svg style="left:32px;top:3.5px" width="12" height="8" viewBox="0 0 16 11" ><path d="M.8 5.500L4 1.800H12L15.200 5.500V8.800Q15.200 10 14 10H2Q.8 10 .8 8.800Z" fill="#a4a4aa" stroke="#55555c" stroke-width=".9"/><path d="M4.300 2.500H11.700L13.900 5.200H2.100Z" fill="#d4d4da"/><path d="M1.200 5.800H14.800V9Q14.800 9.500 14 9.500H2Q1.200 9.500 1.200 9Z" fill="#8a8a92"/><path d="M1.200 5.700H14.800" stroke="#5a5a62" stroke-width=".7"/><circle cx="12.700" cy="7.700" r=".8" fill="#5c5"/></svg>
<span class="a" style="left:47.6px">MILLENIUM (C:)</span>
</div>
<div class="a tr" style="top:85.86px">
<svg style="left:20px;top:3.1px" width="7.2" height="7.2" viewBox="0 0 7.2 7.2" ><rect x=".4" y=".4" width="6.400" height="6.400" rx=".8" fill="#fff" stroke="#8794a8" stroke-width=".8"/><path d="M1.600 3.600H5.600" stroke="#111" stroke-width="1"/><path d="M3.600 1.600V5.600" stroke="#111" stroke-width="1"/></svg>
<svg style="left:32px;top:3.5px" width="12" height="8" viewBox="0 0 16 11" ><path d="M.8 5.500L4 1.800H12L15.200 5.500V8.800Q15.200 10 14 10H2Q.8 10 .8 8.800Z" fill="#a4a4aa" stroke="#55555c" stroke-width=".9"/><path d="M4.300 2.500H11.700L13.900 5.200H2.100Z" fill="#d4d4da"/><path d="M1.200 5.800H14.800V9Q14.800 9.500 14 9.500H2Q1.200 9.500 1.200 9Z" fill="#8a8a92"/><path d="M1.200 5.700H14.800" stroke="#5a5a62" stroke-width=".7"/><circle cx="12.700" cy="7.700" r=".8" fill="#5c5"/></svg>
<span class="a" style="left:47.6px">XP (D:)</span>
</div>
<div class="a tr" style="top:99.14px">
<svg style="left:20px;top:3.1px" width="7.2" height="7.2" viewBox="0 0 7.2 7.2" ><rect x=".4" y=".4" width="6.400" height="6.400" rx=".8" fill="#fff" stroke="#8794a8" stroke-width=".8"/><path d="M1.600 3.600H5.600" stroke="#111" stroke-width="1"/><path d="M3.600 1.600V5.600" stroke="#111" stroke-width="1"/></svg>
<svg style="left:32px;top:3.5px" width="12" height="8" viewBox="0 0 16 11" ><path d="M.8 5.500L4 1.800H12L15.200 5.500V8.800Q15.200 10 14 10H2Q.8 10 .8 8.800Z" fill="#a4a4aa" stroke="#55555c" stroke-width=".9"/><path d="M4.300 2.500H11.700L13.900 5.200H2.100Z" fill="#d4d4da"/><path d="M1.200 5.800H14.800V9Q14.800 9.500 14 9.500H2Q1.200 9.500 1.200 9Z" fill="#8a8a92"/><path d="M1.200 5.700H14.800" stroke="#5a5a62" stroke-width=".7"/><circle cx="12.700" cy="7.700" r=".8" fill="#5c5"/></svg>
<span class="a" style="left:47.6px">DATEN (E:)</span>
</div>
<div class="a tr" style="top:112.42px">
<svg style="left:20px;top:3.1px" width="7.2" height="7.2" viewBox="0 0 7.2 7.2" ><rect x=".4" y=".4" width="6.400" height="6.400" rx=".8" fill="#fff" stroke="#8794a8" stroke-width=".8"/><path d="M1.600 3.600H5.600" stroke="#111" stroke-width="1"/><path d="M3.600 1.600V5.600" stroke="#111" stroke-width="1"/></svg>
<svg style="left:32px;top:3.5px" width="12" height="8" viewBox="0 0 16 11" ><path d="M.8 5.500L4 1.800H12L15.200 5.500V8.800Q15.200 10 14 10H2Q.8 10 .8 8.800Z" fill="#a4a4aa" stroke="#55555c" stroke-width=".9"/><path d="M4.300 2.500H11.700L13.900 5.200H2.100Z" fill="#d4d4da"/><path d="M1.200 5.800H14.800V9Q14.800 9.500 14 9.500H2Q1.200 9.500 1.200 9Z" fill="#8a8a92"/><path d="M1.200 5.700H14.800" stroke="#5a5a62" stroke-width=".7"/><circle cx="12.700" cy="7.700" r=".8" fill="#5c5"/></svg>
<span class="a" style="left:47.6px">SPEICHER (F:)</span>
</div>
<div class="a tr" style="top:125.70px">
<svg style="left:20px;top:3.1px" width="7.2" height="7.2" viewBox="0 0 7.2 7.2" ><rect x=".4" y=".4" width="6.400" height="6.400" rx=".8" fill="#fff" stroke="#8794a8" stroke-width=".8"/><path d="M1.600 3.600H5.600" stroke="#111" stroke-width="1"/><path d="M3.600 1.600V5.600" stroke="#111" stroke-width="1"/></svg>
<svg style="left:32px;top:0.8px" width="12" height="12" viewBox="0 0 16 16" ><circle cx="8" cy="6" r="5.200" fill="#eceef8" stroke="#6a7098" stroke-width="1"/><circle cx="8" cy="6" r="1.600" fill="#fff" stroke="#7a80a0" stroke-width=".7"/><path d="M8 6L12 3A5.200 5.200 0 0 1 13 7Z" fill="#c8b8e0" opacity=".7"/><path d="M.8 12L3.500 9.300H12.500L15.200 12V14Q15.200 15.200 14 15.200H2Q.8 15.200 .8 14Z" fill="#a8a8b0" stroke="#55555c" stroke-width=".9"/><path d="M1.200 12.200H14.800" stroke="#5a5a62" stroke-width=".7"/></svg>
<span class="a" style="left:47.6px">CD-RW-Laufwerk (G:)</span>
</div>
<div class="a tr" style="top:138.98px">
<svg style="left:32px;top:0.8px" width="12" height="12" viewBox="0 0 16 16" ><circle cx="8" cy="8" r="6.800" fill="#f0f0fa" stroke="#6c6cac" stroke-width="1.200"/><path d="M8 8L13 3.500A6.700 6.700 0 0 1 14.600 7Z" fill="#d0a8e4" opacity=".85"/><path d="M8 8L2 10A6.700 6.700 0 0 0 4 13.300Z" fill="#a8d0f0" opacity=".85"/><circle cx="8" cy="8" r="2.100" fill="#fff" stroke="#7c7cb4" stroke-width=".9"/></svg>
<span class="a" style="left:46.1px;top:-.3px;height:12.600px;padding:2.100px 3.500px 0 1.500px;background:#2d60c4;color:#fff;letter-spacing:.08px">S2000 Battles (H:)</span>
</div>
<div class="a tr" style="top:152.26px">
<svg style="left:20px;top:3.1px" width="7.2" height="7.2" viewBox="0 0 7.2 7.2" ><rect x=".4" y=".4" width="6.400" height="6.400" rx=".8" fill="#fff" stroke="#8794a8" stroke-width=".8"/><path d="M1.600 3.600H5.600" stroke="#111" stroke-width="1"/><path d="M3.600 1.600V5.600" stroke="#111" stroke-width="1"/></svg>
<svg style="left:32px;top:0.8px" width="12" height="12" viewBox="0 0 16 16" ><ellipse cx="8" cy="6.500" rx="6" ry="5" fill="#f4f0e0" stroke="#3a2a10" stroke-width="1"/><ellipse cx="8" cy="8" rx="3.200" ry="3.500" fill="#3a2a14"/><circle cx="6.600" cy="7" r=".8" fill="#fff"/><circle cx="9.400" cy="7" r=".8" fill="#fff"/><path d="M1.500 12.500L3.500 11H12.500L14.500 12.500V14.500H1.500Z" fill="#d8a020" stroke="#6a4a10" stroke-width=".7"/></svg>
<span class="a" style="left:47.6px">Virtual CloneDrive (I:)</span>
</div>
<div class="a tr" style="top:165.54px">
<svg style="left:20px;top:3.1px" width="7.2" height="7.2" viewBox="0 0 7.2 7.2" ><rect x=".4" y=".4" width="6.400" height="6.400" rx=".8" fill="#fff" stroke="#8794a8" stroke-width=".8"/><path d="M1.600 3.600H5.600" stroke="#111" stroke-width="1"/><path d="M3.600 1.600V5.600" stroke="#111" stroke-width="1"/></svg>
<svg style="left:32px;top:0.8px" width="12" height="12" viewBox="0 0 16 16" ><rect x="1.800" y="1.800" width="9.500" height="12.400" rx="1.800" fill="#f0f6fc" stroke="#2c4a8c" stroke-width="1.900"/><path d="M4.200 5.300H8.800M4.200 7.800H8.800M4.200 10.300H7" stroke="#7aa4dc" stroke-width="1"/><path d="M8.800 10L14.300 4.300L15.600 5.800L10.500 11.500L8.300 12Z" fill="#5a76c0" stroke="#2a3a78" stroke-width=".7"/></svg>
<span class="a" style="left:47.6px">Systemsteuerung</span>
</div>
<div class="a tr" style="top:178.82px">
<svg style="left:20px;top:3.1px" width="7.2" height="7.2" viewBox="0 0 7.2 7.2" ><rect x=".4" y=".4" width="6.400" height="6.400" rx=".8" fill="#fff" stroke="#8794a8" stroke-width=".8"/><path d="M1.600 3.600H5.600" stroke="#111" stroke-width="1"/><path d="M3.600 1.600V5.600" stroke="#111" stroke-width="1"/></svg>
<svg style="left:32px;top:0.8px" width="12" height="12" viewBox="0 0 16 15" ><path d="M1 3.2Q1 2 2.2 2H5.5L7 3.5H13.8Q15 3.5 15 4.7V11H1Z" fill="#f3d676" stroke="#b8923a" stroke-width=".9"/><path d="M0.500 10.500Q4 7.500 8 10Q12 12 15.500 9.500V13.500Q8 15.500 0.500 13.500Z" fill="#c98a3c" stroke="#7a4a1c" stroke-width=".7"/></svg>
<span class="a" style="left:47.6px">Gemeinsame Dokumente</span>
</div>
<div class="a tr" style="top:192.10px">
<svg style="left:20px;top:3.1px" width="7.2" height="7.2" viewBox="0 0 7.2 7.2" ><rect x=".4" y=".4" width="6.400" height="6.400" rx=".8" fill="#fff" stroke="#8794a8" stroke-width=".8"/><path d="M1.600 3.600H5.600" stroke="#111" stroke-width="1"/><path d="M3.600 1.600V5.600" stroke="#111" stroke-width="1"/></svg>
<svg style="left:32px;top:0.8px" width="12" height="12" viewBox="0 0 16 15" ><path d="M1 3.200Q1 2 2.200 2H5.500L7 3.500H13.800Q15 3.500 15 4.700V12.800Q15 14 13.800 14H2.200Q1 14 1 12.800Z" fill="#f4e070" stroke="#a08c34" stroke-width="1.100"/><path d="M1.700 5.600H14.300V8.500H1.700Z" fill="#fdf6b8" opacity=".85"/><path d="M1.700 11.500H14.300V13.300H1.700Z" fill="#e0c850" opacity=".8"/></svg>
<span class="a" style="left:47.6px">Dateien von Besitzer</span>
</div>
<div class="a tr" style="top:205.38px">
<svg style="left:5.5px;top:3.1px" width="7.2" height="7.2" viewBox="0 0 7.2 7.2" ><rect x=".4" y=".4" width="6.400" height="6.400" rx=".8" fill="#fff" stroke="#8794a8" stroke-width=".8"/><path d="M1.600 3.600H5.600" stroke="#111" stroke-width="1"/><path d="M3.600 1.600V5.600" stroke="#111" stroke-width="1"/></svg>
<svg style="left:17.5px;top:0.8px" width="12" height="12" viewBox="0 0 16 16" ><circle cx="6" cy="5.500" r="5" fill="#36b4ec" stroke="#1a5aa8" stroke-width=".9"/><path d="M2.500 3.500Q4.500 1.500 7 3Q6.500 6 4 6.800Q2 5.500 2.500 3.500Z" fill="#8ae0a0"/><path d="M7.500 2Q10 3 10 6" fill="none" stroke="#c8f0ff" stroke-width="1"/><rect x="6.500" y="6" width="8.500" height="6.500" rx="1" fill="#3a7ad8" stroke="#1c3c8c" stroke-width="1"/><rect x="8" y="7.300" width="5.500" height="3.800" fill="#b4e4ff"/><path d="M8.500 12.500H13L14.200 14.800H7.300Z" fill="#c4b4dc" stroke="#6a5a98" stroke-width=".6"/></svg>
<span class="a" style="left:33px">Netzwerkumgebung</span>
</div>
<div class="a tr" style="top:218.66px">
<svg style="left:17.5px;top:0.8px" width="12" height="12" viewBox="0 0 16 16" ><path d="M3 4.500H13L12 15H4Z" fill="#f8f9fa" stroke="#3c424a" stroke-width="1.100"/><path d="M2 4.500L4.500 1.500L8 3L11 .8L14 4.500Z" fill="#fff" stroke="#3c424a" stroke-width="1"/><path d="M5.500 7.500L5.800 13M8 7.500V13M10.500 7.500L10.200 13" stroke="#8a9098" stroke-width=".8"/><path d="M12.500 8Q15.500 7.500 14.500 10.500" fill="none" stroke="#4a5058" stroke-width=".9"/></svg>
<span class="a" style="left:33px">Papierkorb</span>
</div>
<div class="a tr" style="top:231.94px">
<svg style="left:17.5px;top:0.8px" width="12" height="12" viewBox="0 0 16 15" ><path d="M1 3.200Q1 2 2.200 2H5.500L7 3.500H13.800Q15 3.500 15 4.700V12.800Q15 14 13.800 14H2.200Q1 14 1 12.800Z" fill="#f4e070" stroke="#a08c34" stroke-width="1.100"/><path d="M1.700 5.600H14.300V8.500H1.700Z" fill="#fdf6b8" opacity=".85"/><path d="M1.700 11.500H14.300V13.300H1.700Z" fill="#e0c850" opacity=".8"/></svg>
<span class="a" style="left:33px">Neuer Ordner</span>
</div>
<div class="a tr" style="top:245.22px">
<svg style="left:17.5px;top:0.8px" width="12" height="12" viewBox="0 0 16 15" ><path d="M1 3.200Q1 2 2.200 2H5.500L7 3.500H13.800Q15 3.500 15 4.700V12.800Q15 14 13.800 14H2.200Q1 14 1 12.800Z" fill="#f4e070" stroke="#a08c34" stroke-width="1.100"/><path d="M1.700 5.600H14.300V8.500H1.700Z" fill="#fdf6b8" opacity=".85"/><path d="M1.700 11.500H14.300V13.300H1.700Z" fill="#e0c850" opacity=".8"/></svg>
<span class="a" style="left:33px">Programme</span>
</div>
<div class="a tr" style="top:258.50px">
<svg style="left:17.5px;top:0.8px" width="12" height="12" viewBox="0 0 16 15" ><path d="M1 3.200Q1 2 2.200 2H5.500L7 3.500H13.800Q15 3.500 15 4.700V12.800Q15 14 13.800 14H2.200Q1 14 1 12.800Z" fill="#f4e070" stroke="#a08c34" stroke-width="1.100"/><path d="M1.700 5.600H14.300V8.500H1.700Z" fill="#fdf6b8" opacity=".85"/><path d="M1.700 11.500H14.300V13.300H1.700Z" fill="#e0c850" opacity=".8"/></svg>
<span class="a" style="left:33px">Spiele</span>
</div>
</div>
<div class="a" id="split"></div>
<div class="a" id="list"><div class="a" id="sorted"></div>
<div class="a" style="left:0;top:0;width:459px;height:391px;overflow:hidden">
<svg style="left:0;top:0" width="459" height="391" viewBox="0 0 459 391"><defs><linearGradient id="fg" x1="0" y1="0" x2="1" y2="1"><stop offset="0" stop-color="#e9edf8"/><stop offset="1" stop-color="#f4f6fc"/></linearGradient><linearGradient id="fade" x1="0" y1="0" x2="0" y2="1"><stop offset=".2" stop-color="#fff" stop-opacity="0"/><stop offset=".62" stop-color="#fff" stop-opacity=".6"/></linearGradient></defs><g transform="translate(341.300,309.100) rotate(-20.300)"><rect x="0" y="0" width="97.500" height="170" fill="#e3e6ef"/><rect x="7.500" y="6.9" width="8.500" height="8" rx="1" fill="#fff"/><rect x="80.500" y="6.9" width="8.500" height="8" rx="1" fill="#fff"/><rect x="7.500" y="20.2" width="8.500" height="8" rx="1" fill="#fff"/><rect x="80.500" y="20.2" width="8.500" height="8" rx="1" fill="#fff"/><rect x="7.500" y="33.5" width="8.500" height="8" rx="1" fill="#fff"/><rect x="80.500" y="33.5" width="8.500" height="8" rx="1" fill="#fff"/><rect x="7.500" y="46.8" width="8.500" height="8" rx="1" fill="#fff"/><rect x="80.500" y="46.8" width="8.500" height="8" rx="1" fill="#fff"/><rect x="7.500" y="60.1" width="8.500" height="8" rx="1" fill="#fff"/><rect x="80.500" y="60.1" width="8.500" height="8" rx="1" fill="#fff"/><rect x="7.500" y="73.4" width="8.500" height="8" rx="1" fill="#fff"/><rect x="80.500" y="73.4" width="8.500" height="8" rx="1" fill="#fff"/><rect x="7.500" y="86.7" width="8.500" height="8" rx="1" fill="#fff"/><rect x="80.500" y="86.7" width="8.500" height="8" rx="1" fill="#fff"/><rect x="7.500" y="100.0" width="8.500" height="8" rx="1" fill="#fff"/><rect x="80.500" y="100.0" width="8.500" height="8" rx="1" fill="#fff"/><rect x="7.500" y="113.3" width="8.500" height="8" rx="1" fill="#fff"/><rect x="80.500" y="113.3" width="8.500" height="8" rx="1" fill="#fff"/><rect x="7.500" y="126.6" width="8.500" height="8" rx="1" fill="#fff"/><rect x="80.500" y="126.6" width="8.500" height="8" rx="1" fill="#fff"/><rect x="21.500" y="1.500" width="55" height="17.500" fill="url(#fg)"/><rect x="21.500" y="27" width="55" height="46.500" fill="url(#fg)"/><rect x="21.500" y="81" width="55" height="46.500" fill="url(#fg)"/><rect x="-1" y="0" width="100" height="171" fill="url(#fade)"/></g></svg>
</div>
<div class="a" id="lh"><span class="a" style="left:8.500px">Name</span><svg style="left:37px;top:5px" width="7" height="4" viewBox="0 0 8 4.5" ><path d="M0 4.500L4 0L8 4.500Z" fill="#aca899"/></svg><div class="a sep" style="left:138px"></div><span class="a" style="left:187px">Größe</span><div class="a sep" style="left:213.200px"></div><span class="a" style="left:222px">Typ</span><div class="a sep" style="left:307.500px"></div><span class="a" style="left:315.500px">Geändert am</span><div class="a sep" style="left:400px"></div></div>
<div class="a r" style="top:16.26px"><svg style="left:2.8px;top:0px" width="11" height="11.5" viewBox="0 0 16 17" ><rect x="1" y="1" width="14" height="15" rx="2.800" fill="#bcd9f2" stroke="#5f92c6" stroke-width="1.500"/><path d="M11 4.600Q8 2.800 5.400 5.200Q3.400 8.500 5.400 11.800Q8 14.200 11 12.400" fill="#f2f8fe" stroke="#4f8ccc" stroke-width="1.500"/><path d="M11 4.600Q13 8.500 11 12.400" fill="none" stroke="#8ebbe4" stroke-width="1.100"/><path d="M8.300 6V9.700M8.300 11V11.800" stroke="#3a80c4" stroke-width="1.500"/></svg><span class="a" style="left:16.500px">1.avi</span><span class="a" style="right:249px">436.420 KB</span><span class="a" style="left:219.500px">AVI-Video</span><span class="a dt" style="left:313px">23.06.2003 22:33</span></div>
<div class="a r" style="top:29.54px"><svg style="left:2.8px;top:0px" width="11" height="11.5" viewBox="0 0 16 17" ><rect x="1" y="1" width="14" height="15" rx="2.800" fill="#bcd9f2" stroke="#5f92c6" stroke-width="1.500"/><path d="M11 4.600Q8 2.800 5.400 5.200Q3.400 8.500 5.400 11.800Q8 14.200 11 12.400" fill="#f2f8fe" stroke="#4f8ccc" stroke-width="1.500"/><path d="M11 4.600Q13 8.500 11 12.400" fill="none" stroke="#8ebbe4" stroke-width="1.100"/><path d="M8.300 6V9.700M8.300 11V11.800" stroke="#3a80c4" stroke-width="1.500"/></svg><span class="a" style="left:16.500px">2.avi</span><span class="a" style="right:249px">188.704 KB</span><span class="a" style="left:219.500px">AVI-Video</span><span class="a dt" style="left:313px">16.10.2003 19:20</span></div>
<div class="a r" style="top:42.82px"><svg style="left:2.8px;top:0px" width="11" height="11.5" viewBox="0 0 16 17" ><rect x="1" y="1" width="14" height="15" rx="2.800" fill="#bcd9f2" stroke="#5f92c6" stroke-width="1.500"/><path d="M11 4.600Q8 2.800 5.400 5.200Q3.400 8.500 5.400 11.800Q8 14.200 11 12.400" fill="#f2f8fe" stroke="#4f8ccc" stroke-width="1.500"/><path d="M11 4.600Q13 8.500 11 12.400" fill="none" stroke="#8ebbe4" stroke-width="1.100"/><path d="M8.300 6V9.700M8.300 11V11.800" stroke="#3a80c4" stroke-width="1.500"/></svg><span class="a" style="left:16.500px">3.avi</span><span class="a" style="right:249px">85.472 KB</span><span class="a" style="left:219.500px">AVI-Video</span><span class="a dt" style="left:313px">01.07.2003 14:00</span></div>
<div class="a r" style="top:56.10px"><svg style="left:2.8px;top:0px" width="11" height="11.5" viewBox="0 0 16 17" ><rect x="1" y="1" width="14" height="15" rx="2.800" fill="#bcd9f2" stroke="#5f92c6" stroke-width="1.500"/><path d="M11 4.600Q8 2.800 5.400 5.200Q3.400 8.500 5.400 11.800Q8 14.200 11 12.400" fill="#f2f8fe" stroke="#4f8ccc" stroke-width="1.500"/><path d="M11 4.600Q13 8.500 11 12.400" fill="none" stroke="#8ebbe4" stroke-width="1.100"/><path d="M8.300 6V9.700M8.300 11V11.800" stroke="#3a80c4" stroke-width="1.500"/></svg><span class="a" style="left:16.500px">4.avi</span><span class="a" style="right:249px">86.200 KB</span><span class="a" style="left:219.500px">AVI-Video</span><span class="a dt" style="left:313px">16.10.2003 20:08</span></div>
<div class="a r" style="top:69.38px"><svg style="left:2.8px;top:0px" width="11" height="11.5" viewBox="0 0 16 17" ><rect x="1" y="1" width="14" height="15" rx="2.800" fill="#bcd9f2" stroke="#5f92c6" stroke-width="1.500"/><path d="M11 4.600Q8 2.800 5.400 5.200Q3.400 8.500 5.400 11.800Q8 14.200 11 12.400" fill="#f2f8fe" stroke="#4f8ccc" stroke-width="1.500"/><path d="M11 4.600Q13 8.500 11 12.400" fill="none" stroke="#8ebbe4" stroke-width="1.100"/><path d="M8.300 6V9.700M8.300 11V11.800" stroke="#3a80c4" stroke-width="1.500"/></svg><span class="a" style="left:16.500px">5.avi</span><span class="a" style="right:249px">226.298 KB</span><span class="a" style="left:219.500px">AVI-Video</span><span class="a dt" style="left:313px">23.06.2003 14:16</span></div>
<div class="a r" style="top:82.66px"><svg style="left:2.8px;top:0px" width="11" height="11.5" viewBox="0 0 16 17" ><rect x="1" y="1" width="14" height="15" rx="2.800" fill="#bcd9f2" stroke="#5f92c6" stroke-width="1.500"/><path d="M11 4.600Q8 2.800 5.400 5.200Q3.400 8.500 5.400 11.800Q8 14.200 11 12.400" fill="#f2f8fe" stroke="#4f8ccc" stroke-width="1.500"/><path d="M11 4.600Q13 8.500 11 12.400" fill="none" stroke="#8ebbe4" stroke-width="1.100"/><path d="M8.300 6V9.700M8.300 11V11.800" stroke="#3a80c4" stroke-width="1.500"/></svg><span class="a" style="left:16.500px">6.avi</span><span class="a" style="right:249px">98.918 KB</span><span class="a" style="left:219.500px">AVI-Video</span><span class="a dt" style="left:313px">25.06.2003 15:26</span></div>
<div class="a r" style="top:95.94px"><svg style="left:2.8px;top:0px" width="11" height="11.5" viewBox="0 0 16 17" ><rect x="1" y="1" width="14" height="15" rx="2.800" fill="#bcd9f2" stroke="#5f92c6" stroke-width="1.500"/><path d="M11 4.600Q8 2.800 5.400 5.200Q3.400 8.500 5.400 11.800Q8 14.200 11 12.400" fill="#f2f8fe" stroke="#4f8ccc" stroke-width="1.500"/><path d="M11 4.600Q13 8.500 11 12.400" fill="none" stroke="#8ebbe4" stroke-width="1.100"/><path d="M8.300 6V9.700M8.300 11V11.800" stroke="#3a80c4" stroke-width="1.500"/></svg><span class="a" style="left:16.500px">7.avi</span><span class="a" style="right:249px">158.616 KB</span><span class="a" style="left:219.500px">AVI-Video</span><span class="a dt" style="left:313px">23.06.2003 14:06</span></div>
<div class="a r" style="top:109.22px"><svg style="left:2.8px;top:0px" width="11" height="11.5" viewBox="0 0 16 17" ><rect x="1" y="1" width="14" height="15" rx="2.800" fill="#bcd9f2" stroke="#5f92c6" stroke-width="1.500"/><path d="M11 4.600Q8 2.800 5.400 5.200Q3.400 8.500 5.400 11.800Q8 14.200 11 12.400" fill="#f2f8fe" stroke="#4f8ccc" stroke-width="1.500"/><path d="M11 4.600Q13 8.500 11 12.400" fill="none" stroke="#8ebbe4" stroke-width="1.100"/><path d="M8.300 6V9.700M8.300 11V11.800" stroke="#3a80c4" stroke-width="1.500"/></svg><span class="a" style="left:16.500px">8.avi</span><span class="a" style="right:249px">110.924 KB</span><span class="a" style="left:219.500px">AVI-Video</span><span class="a dt" style="left:313px">25.06.2003 15:20</span></div>
<div class="a r" style="top:122.50px"><svg style="left:2.8px;top:0px" width="11" height="11.5" viewBox="0 0 16 17" ><rect x="1" y="1" width="14" height="15" rx="2.800" fill="#bcd9f2" stroke="#5f92c6" stroke-width="1.500"/><path d="M11 4.600Q8 2.800 5.400 5.200Q3.400 8.500 5.400 11.800Q8 14.200 11 12.400" fill="#f2f8fe" stroke="#4f8ccc" stroke-width="1.500"/><path d="M11 4.600Q13 8.500 11 12.400" fill="none" stroke="#8ebbe4" stroke-width="1.100"/><path d="M8.300 6V9.700M8.300 11V11.800" stroke="#3a80c4" stroke-width="1.500"/></svg><span class="a" style="left:16.500px">9.avi</span><span class="a" style="right:249px">143.186 KB</span><span class="a" style="left:219.500px">AVI-Video</span><span class="a dt" style="left:313px">25.06.2003 16:12</span></div>
<div class="a r" style="top:135.78px"><svg style="left:2.8px;top:0px" width="11" height="11.5" viewBox="0 0 16 17" ><rect x="1" y="1" width="14" height="15" rx="2.800" fill="#bcd9f2" stroke="#5f92c6" stroke-width="1.500"/><path d="M11 4.600Q8 2.800 5.400 5.200Q3.400 8.500 5.400 11.800Q8 14.200 11 12.400" fill="#f2f8fe" stroke="#4f8ccc" stroke-width="1.500"/><path d="M11 4.600Q13 8.500 11 12.400" fill="none" stroke="#8ebbe4" stroke-width="1.100"/><path d="M8.300 6V9.700M8.300 11V11.800" stroke="#3a80c4" stroke-width="1.500"/></svg><span class="a" style="left:16.500px">10.avi</span><span class="a" style="right:249px">1.057.404 KB</span><span class="a" style="left:219.500px">AVI-Video</span><span class="a dt" style="left:313px">14.10.2003 19:46</span></div>
<div class="a r" style="top:149.06px"><svg style="left:2.8px;top:0px" width="11" height="11.5" viewBox="0 0 16 17" ><rect x="1" y="1" width="14" height="15" rx="2.800" fill="#bcd9f2" stroke="#5f92c6" stroke-width="1.500"/><path d="M11 4.600Q8 2.800 5.400 5.200Q3.400 8.500 5.400 11.800Q8 14.200 11 12.400" fill="#f2f8fe" stroke="#4f8ccc" stroke-width="1.500"/><path d="M11 4.600Q13 8.500 11 12.400" fill="none" stroke="#8ebbe4" stroke-width="1.100"/><path d="M8.300 6V9.700M8.300 11V11.800" stroke="#3a80c4" stroke-width="1.500"/></svg><span class="a" style="left:16.500px">11.avi</span><span class="a" style="right:249px">50.720 KB</span><span class="a" style="left:219.500px">AVI-Video</span><span class="a dt" style="left:313px">16.10.2003 19:56</span></div>
<div class="a r" style="top:162.34px"><svg style="left:2.8px;top:0px" width="11" height="11.5" viewBox="0 0 16 17" ><rect x="1" y="1" width="14" height="15" rx="2.800" fill="#bcd9f2" stroke="#5f92c6" stroke-width="1.500"/><path d="M11 4.600Q8 2.800 5.400 5.200Q3.400 8.500 5.400 11.800Q8 14.200 11 12.400" fill="#f2f8fe" stroke="#4f8ccc" stroke-width="1.500"/><path d="M11 4.600Q13 8.500 11 12.400" fill="none" stroke="#8ebbe4" stroke-width="1.100"/><path d="M8.300 6V9.700M8.300 11V11.800" stroke="#3a80c4" stroke-width="1.500"/></svg><span class="a" style="left:16.500px">12.avi</span><span class="a" style="right:249px">370.598 KB</span><span class="a" style="left:219.500px">AVI-Video</span><span class="a dt" style="left:313px">19.06.2003 23:27</span></div>
<div class="a r" style="top:175.62px"><svg style="left:2.8px;top:0px" width="11" height="11.5" viewBox="0 0 16 17" ><rect x="1" y="1" width="14" height="15" rx="2.800" fill="#bcd9f2" stroke="#5f92c6" stroke-width="1.500"/><path d="M11 4.600Q8 2.800 5.400 5.200Q3.400 8.500 5.400 11.800Q8 14.200 11 12.400" fill="#f2f8fe" stroke="#4f8ccc" stroke-width="1.500"/><path d="M11 4.600Q13 8.500 11 12.400" fill="none" stroke="#8ebbe4" stroke-width="1.100"/><path d="M8.300 6V9.700M8.300 11V11.800" stroke="#3a80c4" stroke-width="1.500"/></svg><span class="a" style="left:16.500px">13.avi</span><span class="a" style="right:249px">146.896 KB</span><span class="a" style="left:219.500px">AVI-Video</span><span class="a dt" style="left:313px">22.06.2003 23:20</span></div>
<div class="a r" style="top:188.90px"><svg style="left:2.8px;top:0px" width="11" height="11.5" viewBox="0 0 16 17" ><rect x="1" y="1" width="14" height="15" rx="2.800" fill="#bcd9f2" stroke="#5f92c6" stroke-width="1.500"/><path d="M11 4.600Q8 2.800 5.400 5.200Q3.400 8.500 5.400 11.800Q8 14.200 11 12.400" fill="#f2f8fe" stroke="#4f8ccc" stroke-width="1.500"/><path d="M11 4.600Q13 8.500 11 12.400" fill="none" stroke="#8ebbe4" stroke-width="1.100"/><path d="M8.300 6V9.700M8.300 11V11.800" stroke="#3a80c4" stroke-width="1.500"/></svg><span class="a" style="left:16.500px">14.avi</span><span class="a" style="right:249px">323.616 KB</span><span class="a" style="left:219.500px">AVI-Video</span><span class="a dt" style="left:313px">22.06.2003 11:03</span></div>
<div class="a r" style="top:202.18px"><svg style="left:2.8px;top:0px" width="11" height="11.5" viewBox="0 0 16 17" ><rect x="1" y="1" width="14" height="15" rx="2.800" fill="#bcd9f2" stroke="#5f92c6" stroke-width="1.500"/><path d="M11 4.600Q8 2.800 5.400 5.200Q3.400 8.500 5.400 11.800Q8 14.200 11 12.400" fill="#f2f8fe" stroke="#4f8ccc" stroke-width="1.500"/><path d="M11 4.600Q13 8.500 11 12.400" fill="none" stroke="#8ebbe4" stroke-width="1.100"/><path d="M8.300 6V9.700M8.300 11V11.800" stroke="#3a80c4" stroke-width="1.500"/></svg><span class="a" style="left:16.500px">15.avi</span><span class="a" style="right:249px">135.722 KB</span><span class="a" style="left:219.500px">AVI-Video</span><span class="a dt" style="left:313px">16.10.2003 20:31</span></div>
</div>
</div></div>
</div></body></html>
